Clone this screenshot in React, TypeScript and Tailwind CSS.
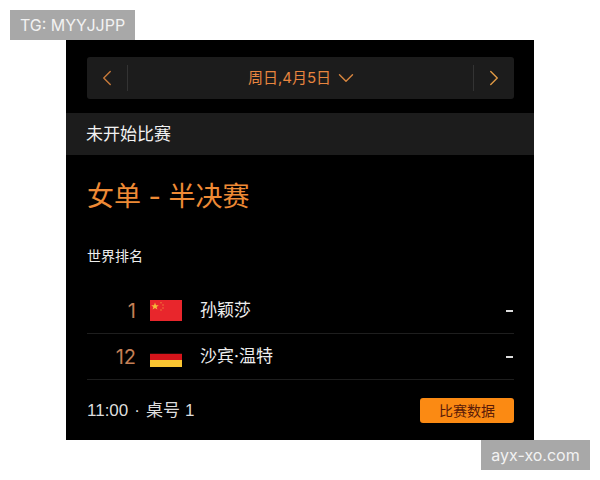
import { ChevronDown, ChevronLeft, ChevronRight } from 'lucide-react';

const font = { fontFamily: '"Inter", "Noto Sans CJK SC", sans-serif' };

const players = [
  { rank: '1', name: '孙颖莎', flag: 'cn' },
  { rank: '12', name: '沙宾·温特', flag: 'de' },
];

const ChinaFlag = () => (
  <svg width="32" height="21" viewBox="0 0 32 21" className="block">
    <rect width="32" height="21" fill="#e8262c" />
    <polygon points="5,2.5 6,5.2 8.8,5.2 6.6,6.9 7.4,9.6 5,8 2.6,9.6 3.4,6.9 1.2,5.2 4,5.2" fill="#f5b93a" />
    <circle cx="11" cy="2.8" r="0.7" fill="#f0883a" />
    <circle cx="13" cy="5" r="0.7" fill="#f0883a" />
    <circle cx="13" cy="8" r="0.7" fill="#f0883a" />
    <circle cx="11" cy="10" r="0.7" fill="#f0883a" />
  </svg>
);

const GermanyFlag = () => (
  <svg width="32" height="14" viewBox="0 0 32 14" className="block">
    <rect width="32" height="1" y="0" fill="#2a0a08" />
    <rect width="32" height="7" y="1" fill="#d5141a" />
    <rect width="32" height="7" y="7" fill="#fbc531" />
  </svg>
);

export default function App() {
  return (
    <div className="relative h-[480px] w-[600px] overflow-hidden bg-white" style={font}>
      <div className="absolute left-[10px] top-[10px] flex h-[30px] w-[125px] items-center justify-center bg-[#a8a8a8] text-[16px] text-[#f2f2f2]">
        TG: MYYJJPP
      </div>
      <div className="absolute left-[481px] top-[440px] flex h-[30px] w-[109px] items-center justify-center bg-[#a8a8a8] text-[16px] text-[#f2f2f2]">
        ayx-xo.com
      </div>

      <div className="mx-auto flex h-[400px] w-[468px] translate-y-[40px] flex-col bg-black">
        <div className="pl-[21px] pr-[20px] pt-[17px]">
          <div className="flex h-[42px] items-center rounded-[3px] bg-[#1c1c1c]">
            <div className="flex h-[26px] w-[41px] items-center justify-center border-r border-[#333]">
              <ChevronLeft size={26} strokeWidth={1.3} className="text-[#c87a3a]" />
            </div>
            <div className="flex flex-1 items-center justify-center gap-[2px] pl-[6px] text-[15px] text-[#e8853f]">
              <span>周日,4月5日</span>
              <ChevronDown size={26} strokeWidth={1.3} className="text-[#d8863f]" />
            </div>
            <div className="flex h-[26px] w-[41px] items-center justify-center border-l border-[#333]">
              <ChevronRight size={26} strokeWidth={1.3} className="text-[#e09a45]" />
            </div>
          </div>
        </div>

        <div className="mt-[14px] flex h-[42px] items-center bg-[#1c1c1c] px-[20px] pt-[1px] text-[17px] text-[#f2f2f2]">
          未开始比赛
        </div>

        <h1 className="mt-[25px] px-[21px] text-[27px] font-normal leading-[34px] text-[#ee8a35]">女单 - 半决赛</h1>
        <p className="mt-[32px] px-[21px] text-[14px] leading-[20px] text-[#eeeeee]">世界排名</p>

        <div className="ml-[21px] mr-[20px] mt-[22px]">
          {players.map((p) => (
            <div key={p.rank} className="flex h-[46px] items-center border-b border-[#1e1e1e] text-[#eeeeee]">
              <span className="w-[49px] text-right text-[20px] text-[#c47f55]">{p.rank}</span>
              <span className="ml-[14px] flex w-[32px] justify-center">
                {p.flag === 'cn' ? <ChinaFlag /> : <span className="mt-[6px]"><GermanyFlag /></span>}
              </span>
              <span className="ml-[18px] flex-1 text-[17px]">{p.name}</span>
              <span className="mr-[1px] h-[2px] w-[7px] bg-[#dddddd]" />
            </div>
          ))}
        </div>

        <div className="flex flex-1 items-center justify-between pl-[21px] pr-[20px]">
          <span className="flex items-center pt-[1px] text-[17px] text-[#dddddd]" style={{ fontFamily: '"Liberation Sans", "Noto Sans CJK SC", sans-serif' }}>
            <span>11:00</span>
            <span className="mx-[6px]">·</span>
            <span>桌号</span>
            <span className="ml-[5px]">1</span>
          </span>
          <button className="flex h-[25px] w-[94px] items-center justify-center rounded-[3px] bg-[#fb8a13] text-[14px] text-[#5a1a08]">
            比赛数据
          </button>
        </div>
      </div>
    </div>
  );
}
